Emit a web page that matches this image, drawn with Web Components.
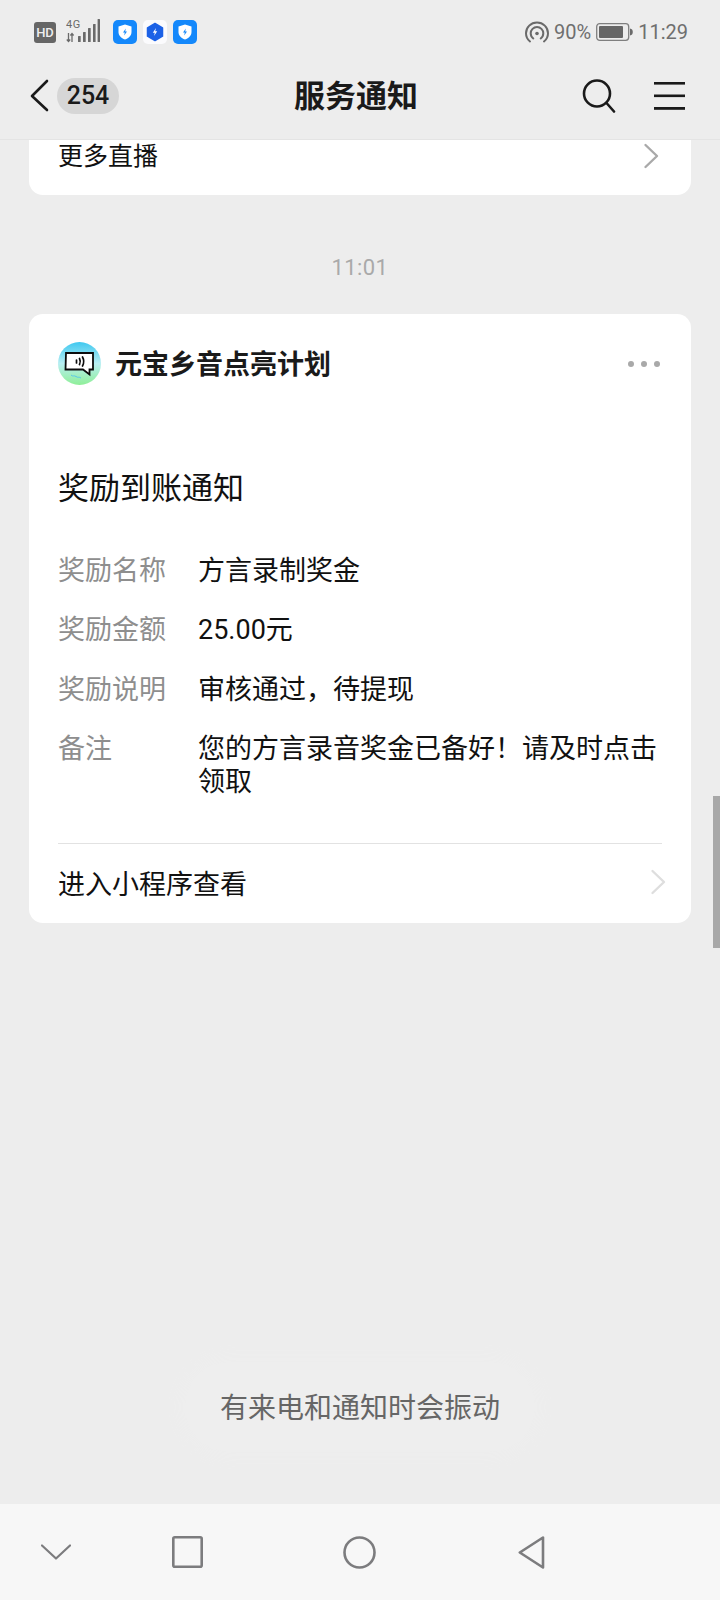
<!DOCTYPE html>
<html lang="zh">
<head>
<meta charset="utf-8">
<title>服务通知</title>
<style>
  html, body { margin: 0; height: 100%; }
  body {
    background: #ededed;
    font-family: "Roboto", "Noto Sans CJK SC", sans-serif;
    width: 720px;
    height: 1600px;
    overflow: hidden;
    display: flex;
    flex-direction: column;
    position: relative;
  }
</style>
</head>
<body>
<status-bar></status-bar>
<nav-header count="254" heading="服务通知"></nav-header>

<main-feed>
  <more-card>更多直播</more-card>
  <time-stamp>11:01</time-stamp>
  <notice-card sender="元宝乡音点亮计划" heading="奖励到账通知" action="进入小程序查看">
    <info-row label="奖励名称">方言录制奖金</info-row>
    <info-row label="奖励金额">25.00元</info-row>
    <info-row label="奖励说明">审核通过，待提现</info-row>
    <info-row label="备注">您的方言录音奖金已备好！请及时点击领取</info-row>
  </notice-card>
</main-feed>

<toast-note>有来电和通知时会振动</toast-note>
<system-nav></system-nav>
<scroll-thumb></scroll-thumb>

<script>
// small helper, every element just sets its shadow html once
class Base extends HTMLElement {
  constructor() {
    super();
    this.attachShadow({ mode: 'open' });
  }
}

const shield = (bg, inner) => `
  <svg width="24" height="24" viewBox="0 0 24 24">
    <rect width="24" height="24" rx="5" fill="${bg}"/>
    ${inner}
  </svg>`;

const shieldBlue = shield('#1488fb', `
  <path d="M12 4.500 18.500 6.600V12c0 3.600-2.600 6-6.500 7.600C8.100 18 5.500 15.600 5.500 12V6.600Z" fill="#fff"/>
  <path d="M12.800 8.500 10 12.500h1.800L11.200 15.500 14 11.500h-1.800Z" fill="#1488fb"/>`);

const hexBlue = shield('#fbfbfd', `
  <path d="M12 3.500 19.500 7.800V16.200L12 20.500 4.500 16.200V7.800Z" fill="#1c62e6" stroke="#1c62e6" stroke-width="1.500" stroke-linejoin="round"/>
  <path d="M13 8 9.800 12.800h2L11 16l3.200-4.800h-2Z" fill="#fff"/>`);

class StatusBar extends Base {
  connectedCallback() {
    this.shadowRoot.innerHTML = `
      <style>
        :host {
          display: flex;
          justify-content: space-between;
          align-items: center;
          height: 64px;
          padding: 0 32px 0 34px;
          color: #6f6f6f;
          font-family: "Roboto", sans-serif;
        }
        .side { display: flex; align-items: center; }
        .hd {
          width: 22px; height: 21px;
          background: #666; color: #eee;
          border-radius: 3px;
          font-size: 13px; font-weight: 500; line-height: 21px; text-align: center;
          margin-right: 10px;
        }
        .sig { margin-right: 13px; }
        .apps { display: flex; gap: 6px; }
        .pct { font-size: 20px; margin: 0 5px; }
        .time { font-size: 20px; margin-left: 5px; }
      </style>
      <div class="side">
        <div class="hd">HD</div>
        <svg class="sig" width="34" height="28" viewBox="0 0 34 28">
          <text x="0" y="9.500" font-family="Roboto, sans-serif" font-size="11" fill="#6a6a6a" letter-spacing=".6">4G</text>
          <g fill="none" stroke="#6a6a6a" stroke-width="1.300">
            <path d="M2.500 15V23.500M.8 21.500 2.500 23.500 4.200 21.500"/>
            <path d="M6 24V15.500M4.400 17.500 6 15.500 7.600 17.500"/>
          </g>
          <g fill="#6a6a6a">
            <rect x="12" y="18" width="2.700" height="6" rx=".5"/>
            <rect x="17" y="14" width="2.700" height="10" rx=".5"/>
            <rect x="22" y="10" width="2.700" height="14" rx=".5"/>
            <rect x="27" y="6" width="2.600" height="18" rx=".5"/>
            <rect x="31.600" y="1" width="2.400" height="23" rx=".5"/>
          </g>
        </svg>
        <div class="apps">${shieldBlue}${hexBlue}${shieldBlue}</div>
      </div>
      <div class="side">
        <svg width="24" height="22" viewBox="0 0 24 22" fill="none" stroke="#6a6a6a" stroke-width="2" stroke-linecap="round">
          <path d="M5 20.500C2.600 18.600 1 15.600 1 12.300 1 6.300 5.900 1.500 12 1.500S23 6.300 23 12.300c0 3.300-1.600 6.300-4 8.200"/>
          <path d="M8.300 17.500C6.700 16.300 5.700 14.400 5.700 12.300c0-3.500 2.800-6.300 6.300-6.300s6.300 2.800 6.300 6.300c0 2.100-1 4-2.600 5.200"/>
          <circle cx="12" cy="12.500" r="1.800" fill="#6a6a6a" stroke="none"/>
        </svg>
        <span class="pct">90%</span>
        <svg width="37" height="20" viewBox="0 0 37 20">
          <rect x=".7" y="1.700" width="32" height="16.600" rx="3" fill="none" stroke="#7f7f7f" stroke-width="1.300"/>
          <rect x="3" y="4" width="24" height="12" rx="1" fill="#666"/>
          <path d="M34 6.500c1.800.3 2.800 1.500 2.800 3.500s-1 3.200-2.800 3.500Z" fill="#6a6a6a"/>
        </svg>
        <span class="time">11:29</span>
      </div>`;
  }
}

class NavHeader extends Base {
  connectedCallback() {
    this.shadowRoot.innerHTML = `
      <style>
        :host {
          display: flex;
          align-items: center;
          height: 76px;
          box-sizing: border-box;
          padding: 0 34px 12px 30px;
          border-bottom: 1px solid #e4e4e4;
          color: #1a1a1a;
        }
        .back { display: flex; align-items: center; gap: 7px; }
        .count {
          width: 62px; height: 36px;
          border-radius: 18px;
          background: #d6d6d6;
          font: 500 25px/36px "Roboto", sans-serif;
          text-align: center;
        }
        h1 {
          flex: 1;
          margin: 0;
          font-size: 31px;
          font-weight: 700;
          text-align: center;
          padding: 0 0 4px 11px;
        }
        .tools { display: flex; align-items: center; gap: 38px; }
      </style>
      <div class="back">
        <svg width="20" height="34" viewBox="0 0 20 34" fill="none" stroke="#1a1a1a" stroke-width="2.600" stroke-linecap="round" stroke-linejoin="round">
          <path d="M17 2 2 17 17 31"/>
        </svg>
        <div class="count">${this.getAttribute('count')}</div>
      </div>
      <h1>${this.getAttribute('heading')}</h1>
      <div class="tools">
        <svg width="34" height="34" viewBox="0 0 34 34" fill="none" stroke="#1a1a1a" stroke-width="2.600" stroke-linecap="round">
          <circle cx="15" cy="14.500" r="13"/>
          <path d="M24.500 24 32 32.500"/>
        </svg>
        <svg width="32" height="30" viewBox="0 0 32 30" fill="#1a1a1a">
          <rect y="1" width="31" height="2.600"/>
          <rect y="13.500" width="31" height="2.600"/>
          <rect y="26" width="31" height="2.800"/>
        </svg>
      </div>`;
  }
}

class MainFeed extends Base {
  connectedCallback() {
    this.shadowRoot.innerHTML = `
      <style>
        :host {
          display: flex;
          flex-direction: column;
          flex: 1;
          padding: 0 29px;
        }
      </style>
      <slot></slot>`;
  }
}

const chevron = (color) => `
  <svg width="16" height="26" viewBox="0 0 16 26" fill="none" stroke="${color}" stroke-width="2.400" stroke-linecap="round" stroke-linejoin="round">
    <path d="M2.500 2 14 13 2.500 24"/>
  </svg>`;

class MoreCard extends Base {
  connectedCallback() {
    this.shadowRoot.innerHTML = `
      <style>
        :host {
          display: flex;
          justify-content: space-between;
          align-items: center;
          height: 55px;
          box-sizing: border-box;
          padding: 0 32px 23px 29px;
          background: #fff;
          border-radius: 0 0 14px 14px;
          font-size: 25px;
          line-height: 34px;
          color: #111;
        }
        span { margin-bottom: -2px; }
      </style>
      <span><slot></slot></span>${chevron('#a9a9a9')}`;
  }
}

class TimeStamp extends Base {
  connectedCallback() {
    this.shadowRoot.innerHTML = `
      <style>
        :host {
          display: block;
          padding: 58px 0 31px;
          text-align: center;
          font: 22px/30px "Roboto", sans-serif;
          color: #a9a9a9;
          letter-spacing: .4px;
        }
      </style>
      <slot></slot>`;
  }
}

class NoticeCard extends Base {
  connectedCallback() {
    this.shadowRoot.innerHTML = `
      <style>
        :host {
          display: block;
          background: #fff;
          border-radius: 14px;
          padding: 0 29px;
          box-sizing: border-box;
          height: 609px;
          color: #111;
        }
        .top {
          display: flex;
          align-items: center;
          gap: 14px;
          padding-top: 28px;
          height: 43px;
        }
        .sender { flex: 1; font-size: 27px; font-weight: 700; color: #1a1a1a; line-height: 39px; padding-top: 4px; }
        .dots { display: flex; gap: 7px; margin-right: 2px; }
        .dots i { width: 6px; height: 6px; border-radius: 50%; background: #a9a9a9; }
        h2 {
          margin: 81px 0 0;
          font-size: 31px;
          font-weight: 400;
          line-height: 46px;
        }
        .rows { margin-top: 40px; }
        .foot {
          margin-top: 21px;
          border-top: 1px solid #e2e2e2;
          height: 77px;
          display: flex;
          justify-content: space-between;
          align-items: center;
          font-size: 27px;
        }
        .foot svg { margin-right: -4px; }
      </style>
      <div class="top">
        <svg width="43" height="43" viewBox="0 0 43 43">
          <defs>
            <linearGradient id="ava" x1="0" y1="0" x2="0" y2="1">
              <stop offset="0" stop-color="#3fc8f0"/>
              <stop offset=".5" stop-color="#b8eef2"/>
              <stop offset="1" stop-color="#8fef98"/>
            </linearGradient>
          </defs>
          <circle cx="21.500" cy="21.500" r="21.500" fill="url(#ava)"/>
          <path d="M8 11H35V27.500H31.500V32.500L25 27.500H7.500Z" fill="#fff" stroke="#0c0c0c" stroke-width="1.800" stroke-linejoin="miter"/>
          <g fill="none" stroke="#0c0c0c" stroke-width="1.700" stroke-linecap="round">
            <path d="M18.500 18v3"/>
            <path d="M21.500 16.500c.9 1.800.9 4.200 0 6"/>
            <path d="M24.500 15c1.500 2.800 1.500 6.200 0 9"/>
          </g>
          <path d="M13 33c2 2 3 0 5 1.500s3 0 5 1.500" fill="none" stroke="#58c6ea" stroke-width="1"/>
        </svg>
        <div class="sender">${this.getAttribute('sender')}</div>
        <div class="dots"><i></i><i></i><i></i></div>
      </div>
      <h2>${this.getAttribute('heading')}</h2>
      <div class="rows"><slot></slot></div>
      <div class="foot">
        <span>${this.getAttribute('action')}</span>
        ${chevron('#dedede')}
      </div>`;
  }
}

class InfoRow extends Base {
  connectedCallback() {
    this.shadowRoot.innerHTML = `
      <style>
        :host {
          display: grid;
          grid-template-columns: 140px 1fr;
          font-size: 27px;
          line-height: 33.500px;
          padding: 3.400px 0 22.200px;
          color: #111;
        }
        .label { color: #8e8e8e; }
      </style>
      <div class="label">${this.getAttribute('label')}</div>
      <div><slot></slot></div>`;
  }
}

class ToastNote extends Base {
  connectedCallback() {
    this.shadowRoot.innerHTML = `
      <style>
        :host {
          display: block;
          position: absolute;
          left: 185px;
          top: 1362px;
          width: 350px;
          height: 90px;
          border-radius: 45px;
          background: #eeeeee;
          box-shadow: 0 0 18px 6px #eeeeee;
          text-align: center;
          font-size: 28px;
          line-height: 94px;
          color: #666;
        }
      </style>
      <slot></slot>`;
  }
}

class SystemNav extends Base {
  connectedCallback() {
    this.shadowRoot.innerHTML = `
      <style>
        :host {
          display: flex;
          align-items: center;
          height: 96px;
          background: #f7f7f7;
          padding-left: 41px;
        }
        svg { display: block; }
        .sq { margin-left: 101px; }
        .ci { margin-left: 140px; }
        .tr { margin-left: 142px; }
      </style>
      <svg width="30" height="16" viewBox="0 0 30 16" fill="none" stroke="#7c7c7e" stroke-width="2.200" stroke-linecap="round" stroke-linejoin="round">
        <path d="M1 1.500 15 14.500 29 1.500"/>
      </svg>
      <svg class="sq" width="31" height="32" viewBox="0 0 31 32" fill="none" stroke="#7c7c7e" stroke-width="2.600" stroke-linejoin="round">
        <rect x="1.300" y="1.300" width="28.400" height="29.400" rx="1.500"/>
      </svg>
      <svg class="ci" width="33" height="33" viewBox="0 0 33 33" fill="none" stroke="#7c7c7e" stroke-width="2.600">
        <circle cx="16.500" cy="16.500" r="15"/>
      </svg>
      <svg class="tr" width="27" height="33" viewBox="0 0 27 33" fill="none" stroke="#7c7c7e" stroke-width="2.600" stroke-linejoin="round">
        <path d="M25 1.500V31.500L1.800 16.500Z"/>
      </svg>`;
  }
}

class ScrollThumb extends Base {
  connectedCallback() {
    this.shadowRoot.innerHTML = `
      <style>
        :host {
          display: block;
          position: absolute;
          right: 0;
          top: 796px;
          width: 7px;
          height: 152px;
          background: #a8a8a8;
        }
      </style>`;
  }
}

customElements.define('status-bar', StatusBar);
customElements.define('nav-header', NavHeader);
customElements.define('main-feed', MainFeed);
customElements.define('more-card', MoreCard);
customElements.define('time-stamp', TimeStamp);
customElements.define('notice-card', NoticeCard);
customElements.define('info-row', InfoRow);
customElements.define('toast-note', ToastNote);
customElements.define('system-nav', SystemNav);
customElements.define('scroll-thumb', ScrollThumb);
</script>
</body>
</html>
